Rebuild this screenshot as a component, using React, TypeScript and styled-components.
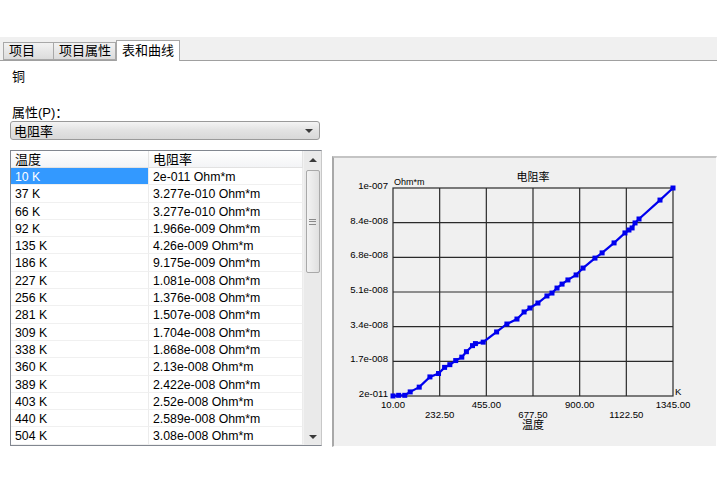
import { Fragment } from 'react';
import { createGlobalStyle, styled } from 'styled-components';

type TabProps = {
  active?: boolean;
  width: number;
};

type CellProps = {
  selected?: boolean;
};

const GlobalStyle = createGlobalStyle`
  html, body {
    margin: 0;
    padding: 0;
    background: #ffffff;
  }
  body {
    font-family: 'Liberation Sans', 'Noto Sans CJK SC', sans-serif;
    font-size: 12px;
    color: #000000;
  }
`;

const Window = styled.div`
  width: 717px;
  margin-top: 37px;
`;

const TabBar = styled.div`
  height: 24px;
  background: #f0f0f0;
  border-bottom: 1px solid #a0a0a0;
  display: flex;
  align-items: flex-end;
  padding-left: 3px;
  box-sizing: border-box;
`;

const Tab = styled.div<TabProps>`
  width: ${(props) => props.width}px;
  height: ${(props) => (props.active ? '21px' : '18px')};
  margin-bottom: ${(props) => (props.active ? '-1px' : '0')};
  padding: 0 5px;
  box-sizing: border-box;
  white-space: nowrap;
  border: 1px solid #a8a8a8;
  border-bottom: ${(props) => (props.active ? 'none' : '1px solid #a8a8a8')};
  border-left: ${(props) => (props.active ? '1px solid #a8a8a8' : 'none')};
  background: ${(props) =>
    props.active ? '#ffffff' : 'linear-gradient(#f2f2f2, #dcdcdc)'};
  font-size: 13px;
  line-height: ${(props) => (props.active ? '19px' : '16px')};
  &:first-child {
    border-left: 1px solid #a8a8a8;
  }
`;

const Content = styled.div`
  padding: 6px 0 0 10px;
`;

const Material = styled.div`
  font-size: 13px;
  line-height: 18px;
  padding-left: 2px;
  padding-top: 1px;
`;

const FieldLabel = styled.div`
  margin-top: 18px;
  font-size: 13px;
  line-height: 17px;
  padding-left: 2px;
`;

const Select = styled.div`
  width: 310px;
  height: 19px;
  box-sizing: border-box;
  border: 1px solid #9a9a9a;
  border-radius: 3px;
  background: linear-gradient(#f4f4f4, #e2e2e2 50%, #d8d8d8);
  display: flex;
  align-items: center;
  justify-content: space-between;
  padding: 0 6px 0 3px;
  font-size: 13px;
`;

const Arrow = styled.span<{ up?: boolean }>`
  width: 0;
  height: 0;
  border-left: 4px solid transparent;
  border-right: 4px solid transparent;
  ${(props) =>
    props.up ? 'border-bottom: 4px solid #3a3a3a;' : 'border-top: 4px solid #3a3a3a;'}
`;

const Body = styled.div`
  display: flex;
  align-items: flex-start;
  gap: 10px;
  margin-top: 10px;
`;

const Table = styled.div`
  width: 312px;
  height: 296px;
  box-sizing: border-box;
  border: 1px solid #828790;
  border-right-color: #c8c8c8;
  display: flex;
  overflow: hidden;
`;

const Grid = styled.div`
  flex: 1;
  display: grid;
  grid-template-columns: 138px 1fr;
  grid-auto-rows: 17.3px;
  grid-template-rows: 17px;
  align-content: start;
`;

const HeadCell = styled.div`
  background: linear-gradient(#ffffff, #f3f4f6);
  border-right: 1px solid #e4e4e4;
  border-bottom: 1px solid #e2e2e2;
  font-size: 13px;
  line-height: 16px;
  padding: 1px 0 0 4px;
  box-sizing: border-box;
`;

const Cell = styled.div<CellProps>`
  background: ${(props) => (props.selected ? '#3399ff' : '#ffffff')};
  color: ${(props) => (props.selected ? '#ffffff' : '#000000')};
  border-right: 1px solid #ececec;
  border-bottom: 1px solid #f0f0f0;
  padding: 2px 0 0 4px;
  box-sizing: border-box;
  line-height: 15px;
  font-size: 12.3px;
  white-space: nowrap;
`;

const ScrollBar = styled.div`
  width: 17px;
  background: #eaeaea;
  border-left: 1px solid #f2f2f2;
  display: flex;
  flex-direction: column;
  align-items: center;
`;

const ScrollButton = styled.div`
  height: 17px;
  width: 100%;
  display: flex;
  align-items: center;
  justify-content: center;
`;

const Thumb = styled.div`
  width: 14px;
  height: 103px;
  margin-top: 2px;
  box-sizing: border-box;
  border: 1px solid #a9a9a9;
  border-radius: 2px;
  background: linear-gradient(90deg, #f3f3f3, #e0e0e0);
  display: flex;
  align-items: center;
  justify-content: center;
`;

const Grip = styled.div`
  width: 7px;
  height: 6px;
  border-top: 1px solid #8a8a8a;
  border-bottom: 1px solid #8a8a8a;
  position: relative;
  box-sizing: border-box;
  &::after {
    content: '';
    position: absolute;
    left: 0;
    right: 0;
    top: 1.5px;
    border-top: 1px solid #8a8a8a;
  }
`;

const Track = styled.div`
  flex: 1;
`;

const ChartPanel = styled.div`
  width: 385px;
  height: 291px;
  margin-top: 6px;
  box-sizing: border-box;
  background: #f0f0f0;
  border-top: 2px solid #c4c4c4;
  border-left: 2px solid #a8a8a8;
  border-right: 1px solid #ffffff;
  border-bottom: 1px solid #ffffff;
`;

const rows: [string, string][] = [
  ['10 K', '2e-011 Ohm*m'],
  ['37 K', '3.277e-010 Ohm*m'],
  ['66 K', '3.277e-010 Ohm*m'],
  ['92 K', '1.966e-009 Ohm*m'],
  ['135 K', '4.26e-009 Ohm*m'],
  ['186 K', '9.175e-009 Ohm*m'],
  ['227 K', '1.081e-008 Ohm*m'],
  ['256 K', '1.376e-008 Ohm*m'],
  ['281 K', '1.507e-008 Ohm*m'],
  ['309 K', '1.704e-008 Ohm*m'],
  ['338 K', '1.868e-008 Ohm*m'],
  ['360 K', '2.13e-008 Ohm*m'],
  ['389 K', '2.422e-008 Ohm*m'],
  ['403 K', '2.52e-008 Ohm*m'],
  ['440 K', '2.589e-008 Ohm*m'],
  ['504 K', '3.08e-008 Ohm*m']
];

// rest of the curve, read off the plot
const tail: [number, number][] = [
  [553, 3.46e-8], [601, 3.7e-8], [635, 4.04e-8], [663, 4.23e-8],
  [701, 4.47e-8], [744, 4.81e-8], [768, 4.95e-8], [792, 5.19e-8],
  [816, 5.38e-8], [844, 5.58e-8], [883, 5.82e-8], [916, 6.15e-8],
  [973, 6.63e-8], [1007, 6.88e-8], [1064, 7.36e-8], [1116, 7.84e-8],
  [1135, 7.98e-8], [1150, 8.08e-8], [1164, 8.32e-8], [1183, 8.51e-8],
  [1283, 9.42e-8], [1345, 1e-7]
];

const points: [number, number][] = [
  ...rows.map(([t, r]) => [parseFloat(t), parseFloat(r)] as [number, number]),
  ...tail
];

const PX = 59;
const PY = 30;
const PW = 280;
const PH = 208;
const sx = (t: number) => PX + ((t - 10) / 1335) * PW;
const sy = (r: number) => PY + PH - (r / 1e-7) * PH;

const yLabels = ['1e-007', '8.4e-008', '6.8e-008', '5.1e-008', '3.4e-008', '1.7e-008', '2e-011'];
const xLabels = ['10.00', '232.50', '455.00', '677.50', '900.00', '1122.50', '1345.00'];

function Chart() {
  const line = points.map(([t, r]) => `${sx(t).toFixed(1)},${sy(r).toFixed(1)}`).join(' ');
  return (
    <svg width="382" height="288" style={{ display: 'block' }}>
      <g fontFamily="'Liberation Sans', 'Noto Sans CJK SC', sans-serif" fontSize="9.6" fill="#000">
        <text x={PX + PW / 2} y={23} fontSize="11" textAnchor="middle">电阻率</text>
        <text x={PX + 1} y={27} fontSize="9">Ohm*m</text>
        {yLabels.map((l, i) => (
          <text key={l} x={54} y={PY + (PH / 6) * i + 1} textAnchor="end">{l}</text>
        ))}
        {xLabels.map((l, i) => (
          <text key={l} x={PX + (PW / 6) * i} y={i % 2 ? 260 : 250} textAnchor="middle">{l}</text>
        ))}
        <text x={PX + PW + 2} y={PH + PY - 1}>K</text>
        <text x={PX + PW / 2} y={271} fontSize="11" textAnchor="middle">温度</text>
      </g>
      <g stroke="#2a2a2a" strokeWidth="1.2" fill="none">
        <rect x={PX} y={PY} width={PW} height={PH} />
        {[1, 2, 3, 4, 5].map((i) => (
          <line key={`v${i}`} x1={PX + (PW / 6) * i} y1={PY} x2={PX + (PW / 6) * i} y2={PY + PH} />
        ))}
        {[1, 2, 3, 4, 5].map((i) => (
          <line key={`h${i}`} x1={PX} y1={PY + (PH / 6) * i} x2={PX + PW} y2={PY + (PH / 6) * i} />
        ))}
      </g>
      <polyline points={line} stroke="#0000ee" strokeWidth="2.2" fill="none" />
      {points.map(([t, r], i) => (
        <rect key={i} x={sx(t) - 2.5} y={sy(r) - 2.5} width="5" height="5" fill="#0000ee" />
      ))}
    </svg>
  );
}

export default function App() {
  return (
    <>
      <GlobalStyle />
      <Window>
        <TabBar>
          <Tab width={51}>项目</Tab>
          <Tab width={62}>项目属性</Tab>
          <Tab width={64} active>表和曲线</Tab>
        </TabBar>
        <Content>
          <Material>铜</Material>
          <FieldLabel>属性(P)：</FieldLabel>
          <Select>
            <span>电阻率</span>
            <Arrow />
          </Select>
          <Body>
            <Table>
              <Grid>
                <HeadCell>温度</HeadCell>
                <HeadCell>电阻率</HeadCell>
                {rows.map(([t, r], i) => (
                  <Fragment key={t}>
                    <Cell selected={i === 0}>{t}</Cell>
                    <Cell>{r}</Cell>
                  </Fragment>
                ))}
              </Grid>
              <ScrollBar>
                <ScrollButton>
                  <Arrow up />
                </ScrollButton>
                <Thumb>
                  <Grip />
                </Thumb>
                <Track />
                <ScrollButton>
                  <Arrow />
                </ScrollButton>
              </ScrollBar>
            </Table>
            <ChartPanel>
              <Chart />
            </ChartPanel>
          </Body>
        </Content>
      </Window>
    </>
  );
}
